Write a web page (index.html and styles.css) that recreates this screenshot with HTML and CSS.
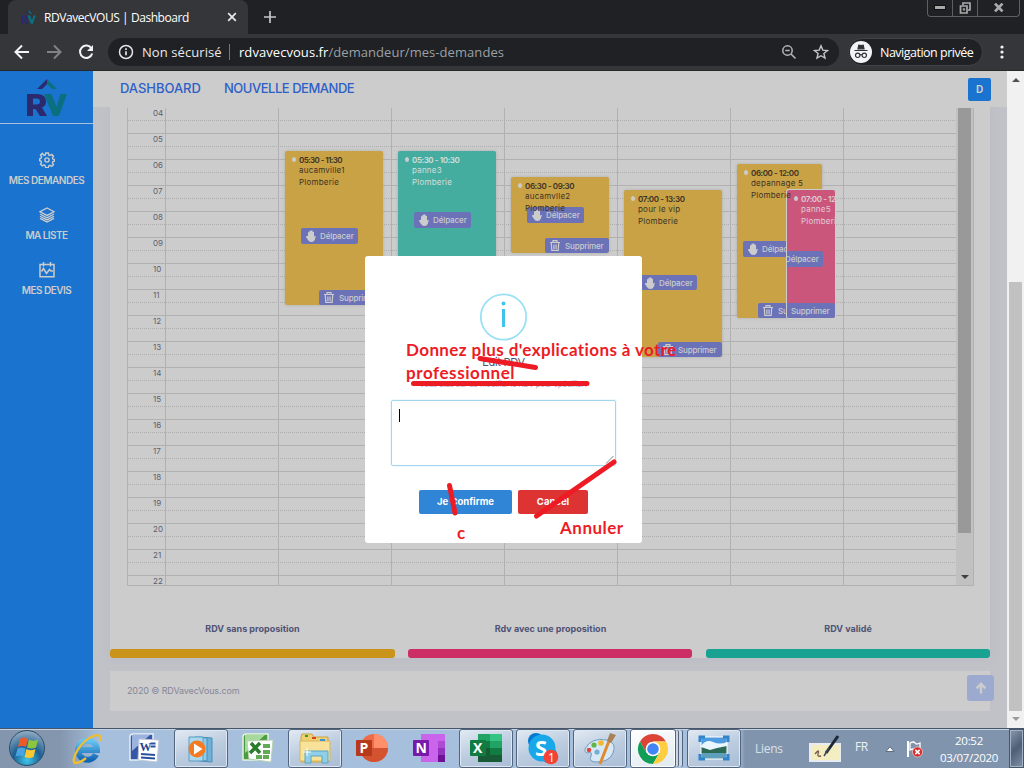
FILE: index.html
```html
<!DOCTYPE html>
<html lang="fr">
<head>
<meta charset="utf-8">
<title>RDVavecVOUS | Dashboard</title>
<link rel="stylesheet" href="styles.css">
</head>
<body>
<svg width="0" height="0" class="defs">
  <symbol id="logo" viewBox="0 0 40 38">
    <path fill="#2b2a6e" d="M10 10 20 0v5l-5 5zM0 15h10q9 0 9 7.500 0 4.500-4 6l5 8.500h-7l-4.500-7H6v7H0zm6 4.500v6h3.500q3.500 0 3.500-3t-3.500-3z"/>
    <path fill="#0c6f80" d="M20 0l10 10h-5l-5-5zM17 15h7.500l5 13 4-13h6.500l-8 22h-6z"/>
  </symbol>
  <symbol id="hand" viewBox="0 0 10 12">
    <path fill="#ccc" d="M2 6V2.500q.8-1.200 1.400 0V1.200q.9-1.200 1.600 0v-.4q.9-1 1.600 0v1.300q.9-.9 1.400 0V7l.6-1q1-.7 1.200.2L8.800 9.800Q8 12 5.300 12 3 12 1.800 9.800L0 7q-.1-1.500 1.200-1z"/>
  </symbol>
  <symbol id="trash" viewBox="0 0 10 11">
    <path fill="none" stroke="#ccc" stroke-width="1.200" d="M0 2.500h10M3 2V.6h4V2M1.300 3l.5 7.400h6.400L8.700 3M3.900 4.500v4.500M6.100 4.500v4.500"/>
  </symbol>
</svg>

<div class="tabstrip">
  <div class="tab">
    <svg class="favicon" width="15" height="14"><use href="#logo"/></svg>
    <span class="tab-title">RDVavecVOUS | Dashboard</span>
    <svg width="10" height="10" viewBox="0 0 10 10"><path d="M1.200 1.200l7.600 7.600M8.800 1.200 1.200 8.800" stroke="#e8eaed" stroke-width="1.700"/></svg>
  </div>
  <svg class="newtab" width="12" height="12"><path d="M6 0v12M0 6h12" stroke="#c4c6ca" stroke-width="1.700"/></svg>
  <div class="winctl">
    <div class="wc"><svg width="12" height="5"><rect x=".5" y=".5" width="11" height="4" fill="#aaa" stroke="#111"/></svg></div>
    <div class="wc"><svg width="12" height="12" fill="none" stroke="#aaa" stroke-width="1.700"><path d="M4 3V1h7v7H9M1.500 4h6.500v7H1.500z"/><path d="M4.200 6.700h1.400v1.400H4.200z" stroke-width="1"/></svg></div>
    <div class="wc wide"><svg width="12" height="9"><path d="M2 .5l7.500 8M9.500 .5l-7.500 8" stroke="#aaa" stroke-width="2.600"/></svg></div>
  </div>
</div>

<div class="toolbar">
  <svg width="104" height="36" fill="none" stroke-width="2">
    <path d="M29 18H16M22 11.500 15.500 18l6.500 6.500" stroke="#f1f3f4"/>
    <path d="M47 18h13M54 11.500 60.500 18 54 24.500" stroke="#808285"/>
    <path d="M91.500 14.500a6.200 6.200 0 1 0 .7 5" stroke="#f1f3f4"/><path d="M93 11v6h-6z" fill="#f1f3f4"/>
  </svg>
  <div class="omnibox">
    <svg width="16" height="16" fill="none" stroke="#e3e5e8" stroke-width="1.500"><circle cx="8" cy="8" r="6.500"/><path d="M8 7.200v4M8 4.300v1.600" stroke-width="1.700"/></svg>
    <span class="unsafe">Non sécurisé</span>
    <span class="sep"></span>
    <span class="url"><b>rdvavecvous.fr</b>/demandeur/mes-demandes</span>
    <svg class="zoomico" width="16" height="16" fill="none" stroke="#b4b6ba" stroke-width="1.500"><circle cx="6.500" cy="6.500" r="4.700"/><path d="M4.300 6.500h4.400M10 10l4.500 4.500"/></svg>
    <svg width="16" height="16" fill="none" stroke="#c4c6ca" stroke-width="1.400"><path d="M8 1.800l1.800 4.300 4.700.4-3.600 3 1.100 4.600L8 11.700 4 14.100l1.100-4.600-3.600-3 4.700-.4z"/></svg>
  </div>
  <div class="incog">
    <svg width="22" height="22"><circle cx="11" cy="11" r="11" fill="#f1f3f4"/><path d="M4.500 9.500h13M8 7.800l.8-3.600 2.200.5 2.200-.5.8 3.600z" fill="#303134" stroke="#303134" stroke-width="1.200"/><g fill="none" stroke="#303134" stroke-width="1.100"><circle cx="7.700" cy="14.300" r="2.200"/><circle cx="14.300" cy="14.300" r="2.200"/><path d="M9.800 14q1.200-.7 2.400 0"/></g></svg>
    <span>Navigation privée</span>
  </div>
  <svg class="kebab" width="4" height="14" fill="#f1f3f4"><circle cx="2" cy="2" r="1.600"/><circle cx="2" cy="7" r="1.600"/><circle cx="2" cy="12" r="1.600"/></svg>
</div>

<div class="page">
  <nav class="side">
    <div class="brand"><svg width="40" height="38"><use href="#logo"/></svg></div>
    <a class="navitem"><svg width="16" height="16" fill="none" stroke="#ccc" stroke-width="1.400"><path d="M6.700 1h2.600l.4 1.900 1.300.6 1.700-1.100 1.800 1.800-1.100 1.700.5 1.300 1.600.1v1.900l-1.600.4-.5 1.300 1.100 1.700-1.800 1.800-1.700-1.100-1.300.6-.4 1.900H6.700l-.4-1.900L5 12.800l-1.700 1.100-1.800-1.800 1.100-1.700L2 9.100l-1.300-.4V7L2 6.200l.6-1.300-1.100-1.700 1.800-1.800L5 3.500l1.300-.6z"/><circle cx="8" cy="8" r="2.100"/></svg><span class="n1">MES DEMANDES</span></a>
    <a class="navitem"><svg width="16" height="16" fill="none" stroke="#ccc" stroke-width="1.300"><path d="M8 1l7 3.700-7 3.700-7-3.700zM1 7l7 3.700L15 7M1 9.200l7 3.700 7-3.700M1 11.400l7 3.700 7-3.700"/></svg><span class="n2">MA LISTE</span></a>
    <a class="navitem"><svg width="16" height="16" fill="none" stroke="#ccc" stroke-width="1.500"><path d="M1 2.500h14v12.300H1zM4.500 0v4.500M11.500 0v4.500M2.500 9.500l2-3 3 5 3-4 1.500 1.500h2"/></svg><span class="n3">MES DEVIS</span></a>
  </nav>

  <main class="main">
    <header class="head"><a class="h1">DASHBOARD</a><a class="h2">NOUVELLE DEMANDE</a><span class="avatar">D</span></header>
    <section class="card">
      <div class="calendar">
        <div class="hours">
          <div>04</div><div>05</div><div>06</div><div>07</div><div>08</div><div>09</div><div>10</div><div>11</div><div>12</div><div>13</div><div>14</div><div>15</div><div>16</div><div>17</div><div>18</div><div>19</div><div>20</div><div>21</div><div>22</div>
        </div>
        <div class="days"><i></i><i></i><i></i><i></i><i></i><i></i><i></i></div>
        <div class="calscroll"><div class="thumb"></div><span class="down"></span></div>

        <div class="event amber e1"><b>05:30 - 11:30</b><p>aucamville1</p><p>Plomberie</p><span class="btn move"><svg width="10" height="12"><use href="#hand"/></svg>Délpacer</span><span class="btn del"><svg width="10" height="11"><use href="#trash"/></svg>Supprimer</span></div>
        <div class="event teal e2"><b>05:30 - 10:30</b><p>panne3</p><p>Plomberie</p><span class="btn move"><svg width="10" height="12"><use href="#hand"/></svg>Délpacer</span></div>
        <div class="event amber e3"><b>06:30 - 09:30</b><p>aucamvlle2</p><p>Plomberie</p><span class="btn move"><svg width="10" height="12"><use href="#hand"/></svg>Délpacer</span><span class="btn del"><svg width="10" height="11"><use href="#trash"/></svg>Supprimer</span></div>
        <div class="event amber e4"><b>07:00 - 13:30</b><p>pour le vip</p><p>Plomberie</p><span class="btn move"><svg width="10" height="12"><use href="#hand"/></svg>Délpacer</span><span class="btn del"><svg width="10" height="11"><use href="#trash"/></svg>Supprimer</span></div>
        <div class="event amber e5"><b>06:00 - 12:00</b><p>depannage 5</p><p>Plomberie</p><span class="btn move"><svg width="10" height="12"><use href="#hand"/></svg>Délpacer</span><span class="btn del"><svg width="10" height="11"><use href="#trash"/></svg>Supprimer</span></div>
        <div class="event pink e6"><b>07:00 - 12:00</b><p>panne5</p><p>Plomberie</p><span class="btn move"><svg width="10" height="12"><use href="#hand"/></svg>Délpacer</span><span class="btn del"><svg width="10" height="11"><use href="#trash"/></svg>Supprimer</span></div>
      </div>
      <div class="legend">
        <div class="lg1">RDV sans proposition<i></i></div>
        <div class="lg2">Rdv avec une proposition<i></i></div>
        <div class="lg3">RDV validé<i></i></div>
      </div>
    </section>
    <footer class="foot">2020 © RDVavecVous.com</footer>
    <span class="totop"><svg width="12" height="12" fill="none" stroke="#ccc" stroke-width="2.400"><path d="M6 11.500V2M1.500 6.300 6 1.800l4.500 4.500"/></svg></span>
  </main>
  <div class="scroll"><span class="up"></span><div class="thumb"></div><span class="down"></span></div>
</div>

<div class="modal">
  <svg class="info" width="48" height="48"><circle cx="23.500" cy="24" r="22.700" fill="none" stroke="#9de0f6" stroke-width="1.800"/><circle cx="23.500" cy="10.500" r="1.900" fill="#3fc3ee"/><rect x="22" y="16" width="3" height="18" fill="#3fc3ee"/></svg>
  <h2>Edit RDV</h2>
  <p>Vous etes sur de modifier le RDV pour spécifier?</p>
  <div class="area"><span class="caret"></span><svg width="9" height="9"><path d="M1 8.500 8.500 1M5 8.500 8.500 5" stroke="#666" stroke-width=".8"/></svg></div>
  <div class="actions"><span class="ok">Je Confirme</span><span class="cancel">Cancel</span></div>
</div>

<svg class="strokes" width="1024" height="768" fill="none" stroke="#ed1c24" stroke-width="5" stroke-linecap="round"><path d="M480 358.500 535.500 367.500M413.500 383.500H587M449.500 485.500 455 513M536.500 516 614 462"/></svg>
<div class="note n-a">Donnez plus d'explications à votre</div>
<div class="note n-b">professionnel</div>
<div class="note n-c">c</div>
<div class="note n-d">Annuler</div>

<div class="taskbar">
  <div class="start"><svg width="38" height="38"><defs><radialGradient id="orb" cx=".5" cy=".85" r=".8"><stop offset="0" stop-color="#3fc6ea"/><stop offset=".5" stop-color="#1c5f92"/><stop offset="1" stop-color="#8aa7bf"/></radialGradient></defs><circle cx="19" cy="19" r="17.500" fill="url(#orb)" stroke="#2b4d68"/><path fill="#ea5a2a" d="M12 10q4-3 8 0l-2 8q-4-2-8 0z"/><path fill="#8cc63e" d="M21 10.500q4 2.500 9 0l-2 8q-4 2-9 0z"/><path fill="#4aa3df" d="M9.500 19.500q4-2 8 0l-2 8q-4-2-8 0z"/><path fill="#fdc72f" d="M18.500 20q4 2.500 9 0l-2 8q-4 2-9 0z"/></svg></div>
  <div class="slot"><svg width="34" height="34"><defs><linearGradient id="ie" x2="0" y2="1"><stop stop-color="#66c5f2"/><stop offset="1" stop-color="#1267b5"/></linearGradient></defs><path d="M26 22.500a9.500 9.500 0 1 1 1-4.500H9" fill="none" stroke="url(#ie)" stroke-width="6"/><path d="M30 9q2-7-5-5.500Q14 7 7 19 1 31 6 31q4 0 10-5" fill="none" stroke="#f2bd2e" stroke-width="2.300"/></svg></div>
  <div class="slot"><svg width="32" height="32"><path d="M2 4q0-3 3-3h20v26H2z" fill="#3558a6" stroke="#e8eef8" stroke-width="1.500"/><path d="M4 2h18L4 18z" fill="#9bb3df"/><path d="M11 6l20 1-2 22-19-2z" fill="#fff" stroke="#bcc7da"/><text x="11.500" y="18" class="serif" font-size="12" fill="#24458f">W</text><path d="M22.500 10.500h5M22.500 13.500h5M13 21l14 1M13 24.500l14 1" stroke="#2b4f9f" stroke-width="1.900"/></svg></div>
  <div class="slot on"><svg width="32" height="32"><path d="M14 4l13 1v24l-13-1z" fill="#6fb2d9" stroke="#4b8db7"/><path d="M10 4l12 1v23l-12-1z" fill="#8ecbea" stroke="#4b8db7"/><path d="M4 4h14v24H4z" fill="#a9d8ef" stroke="#5a9dc4"/><circle cx="12" cy="16" r="8.500" fill="#f47b20"/><path d="M9 10.500l8.500 5.500L9 21.500z" fill="#fff"/></svg></div>
  <div class="slot"><svg width="32" height="32"><path d="M1 4q0-3 3-3h22v26H1z" fill="#4a9c3f" stroke="#e3f3de" stroke-width="1.500"/><path d="M3 2h20L3 20z" fill="#a6d99b"/><path d="M5 8l26-1-2 22-22-3z" fill="#fff" stroke="#b8d2b2"/><path d="M9 10l9 10M18 10 8 20" stroke="#2a7b2c" stroke-width="3.500"/><path d="M21 11h7v4h-7zM21 17h7v4h-7zM14 22h6v4h-6zM21 22h6v4h-6z" fill="#62ab55"/></svg></div>
  <div class="slot on"><svg width="34" height="34"><path d="M3 5l1-3h10l2 3h14v25H3z" fill="#efd06d" stroke="#c9a544"/><path d="M2 9h30v20H2z" fill="#f8e29a" stroke="#d6b65a"/><path d="M7 3h3v2H7z" fill="#2aa33b"/><path d="M14 5h4v2h-4z" fill="#d8402f"/><path d="M22 7h5v2h-5z" fill="#3e8fd4"/><path d="M7 31V19h23v12h-6v-7H13v7z" fill="#8fd0e8" stroke="#5ba4c2"/><path d="M9 16v8M5 20h8" stroke="#fff"/></svg></div>
  <div class="slot"><svg width="32" height="32"><circle cx="18" cy="15" r="14" fill="#ed6c47"/><path d="M18 1a14 14 0 0 1 14 14H18z" fill="#ff8f6b"/><path d="M4 15h28a14 14 0 0 1-28 0z" fill="#d35230"/><rect y="7" width="16" height="16" rx="1" fill="#b7391b"/><text x="3.500" y="20" class="tile">P</text></svg></div>
  <div class="slot"><svg width="32" height="32"><path d="M8 1h24v28H8z" fill="#ca64ea"/><path d="M25 8h7v7h-7z" fill="#ae4bd5"/><path d="M25 15h7v7h-7z" fill="#9332bf"/><path d="M25 22h7v7h-7z" fill="#6d1296"/><rect y="7" width="16" height="16" rx="1" fill="#7719aa"/><text x="2.500" y="20" class="tile">N</text></svg></div>
  <div class="slot on"><svg width="32" height="32"><path d="M8 1h12v28H8z" fill="#21a366"/><path d="M20 1h12v7H20z" fill="#33c481"/><path d="M8 8h12v7H8z" fill="#107c41"/><path d="M20 8h12v7H20z" fill="#21a366"/><path d="M8 15h24v14H8z" fill="#185c37"/><path d="M20 15h12v7H20z" fill="#107c41"/><rect y="7" width="16" height="16" rx="1" fill="#107c41"/><text x="3" y="20" class="tile">X</text></svg></div>
  <div class="slot on"><svg width="32" height="32"><circle cx="9" cy="8" r="8" fill="#0078d4"/><circle cx="22" cy="22" r="8" fill="#0078d4"/><circle cx="15" cy="15" r="13.500" fill="#18a8ea"/><text x="8" y="23" class="tile big">S</text><circle cx="24" cy="24" r="7.300" fill="#f44336"/><text x="21" y="28.500" class="badge">1</text></svg></div>
  <div class="slot on"><svg width="34" height="34"><path d="M2 17Q8 5 24 8q10 3 6 13-4 9-16 9Q5 30 8 24q2-5-4-3-3-1-2-4z" fill="#d7e9f7" stroke="#6f9dc0"/><circle cx="6" cy="18" r="2.300" fill="#e0483c"/><circle cx="11" cy="13" r="2.600" fill="#64b547"/><circle cx="18" cy="11" r="2.800" fill="#f4b82c"/><circle cx="14" cy="20" r="2.600" fill="#75acd8"/><path d="M17 32 26 9" stroke="#e08a2c" stroke-width="3"/><path d="M24 9l3-8 6 2-5 8z" fill="#a98159"/></svg></div>
  <div class="slot on stack"><svg width="32" height="32" viewBox="-16 -16 32 32"><circle r="15" fill="#fff"/><path d="M-13 -7.500A15 15 0 0 1 13 -7.500H0L-6.500 3.800z" fill="#db4437"/><path d="M-13 -7.500A15 15 0 0 0 0 15L6.500 3.800H-6.500z" fill="#109d58"/><path d="M13 -7.500A15 15 0 0 1 0 15L6.500 3.800 6 -3 0 -7.500z" fill="#ffcd40"/><circle r="7.300" fill="#fff"/><circle r="5.800" fill="#4285f4"/></svg></div>
  <div class="slot on"><svg width="32" height="30"><path d="M3 3h26v22H3z" fill="#4d9be0"/><path d="M3 12q5-7 12-4t14 0v8H3z" fill="#eaf6fd"/><path d="M3 13l9 3 7-2 10-2v8H3z" fill="#2c6a56"/><path d="M3 19h26v6H3z" fill="#5f9fba"/><path d="M3 3h26v22H3z" fill="none" stroke="#fff"/><path d="M2 8V3h5M25 3h5v5M30 20v5h-5M7 25H2v-5" fill="none" stroke="#2f84cb" stroke-width="3"/></svg></div>
  <div class="tray">
    <span class="liens">Liens</span>
    <svg class="pen" width="32" height="30"><path d="M1 11h30v17H1z" fill="#f4edc0" stroke="#e8ecf2" stroke-width="2"/><path d="M6 21q5-6 3 0-1 3 3 2" fill="none" stroke="#7a5c50" stroke-width="1.300"/><path d="M17 20 29 3" stroke="#1c2735" stroke-width="3"/><path d="M15 23l5-8" stroke="#3b4856" stroke-width="1.500"/></svg>
    <span class="fr">FR</span>
    <svg class="tri" width="10" height="6"><path d="M1 5.500 5 .7l4 4.800z" fill="#fff" stroke="#5e6f85"/></svg>
    <svg class="flag" width="18" height="18"><path d="M2 1v16" stroke="#fff" stroke-width="2"/><path d="M4 3q4-2 5 0t5 0v8q-4 1-5-1t-5 0z" fill="#8293aa" stroke="#fff" stroke-width="1.300"/><circle cx="11.500" cy="12" r="5" fill="#d9292c" stroke="#f4d0d0" stroke-width=".7"/><path d="M9.300 9.800l4.400 4.400M13.700 9.800l-4.400 4.400" stroke="#fff" stroke-width="1.700"/></svg>
    <span class="clock">20:52<br>03/07/2020</span>
    <span class="peek"></span>
  </div>
</div>
</body>
</html>
```

FILE: styles.css
```css
* { box-sizing: border-box; }
body { margin: 0; width: 1024px; height: 768px; overflow: hidden; position: relative; font-family: Inter, "Open Sans", sans-serif; background: #c1c2c6; }
p, h2 { margin: 0; font-weight: 400; }
svg { display: block; flex: none; }
.defs { position: absolute; }
span { white-space: nowrap; }

/* browser chrome */
.tabstrip { height: 34px; background: #202124; display: flex; align-items: flex-start; padding-left: 8px; font-family: "Open Sans", sans-serif; }
.tab { width: 240px; height: 34px; background: #35363a; border-radius: 8px 8px 0 0; display: flex; align-items: center; padding: 0 11px 0 13px; color: #fff; font-size: 12px; }
.tab-title { flex: 1; margin-left: 8px; letter-spacing: -.44px; }
.newtab { margin: 11px 0 0 16px; }
.winctl { margin-left: auto; margin-right: 4px; display: flex; width: 93px; height: 18px; margin-top: -1px; border: 1px solid #5e5f62; border-top: 0; border-radius: 0 0 4px 4px; }
.wc { width: 25px; display: flex; justify-content: center; align-items: center; border-right: 1px solid #5e5f62; }
.wide { width: 41px; border: 0; }
.toolbar { height: 37px; background: #35363a; border-bottom: 1px solid #28282b; display: flex; align-items: center; font-family: "Open Sans", sans-serif; font-size: 13px; color: #fff; }
.omnibox { margin-left: 4px; width: 731px; height: 28px; border-radius: 14px; background: #202124; display: flex; align-items: center; padding: 0 10px; color: #e8eaed; }
.unsafe { margin-left: 8px; width: 80px; letter-spacing: .08px; }
.sep { width: 1px; height: 16px; background: #75777a; margin: 0 9px 0 7px; }
.url { flex: 1; color: #9aa0a6; letter-spacing: .06px; }
.url b { font-weight: 400; color: #fff; }
.zoomico { margin-right: 16px; }
.incog { margin-left: 9px; width: 135px; height: 28px; border: 1px solid #414246; border-radius: 14px; background: #202124; display: flex; align-items: center; gap: 8px; padding-left: 1px; font-size: 12.500px; letter-spacing: -.5px; }
.kebab { margin-left: 17px; }

/* page shell */
.page { display: flex; height: 657px; }
.side { width: 93px; background: #1973cf; color: #ccc; }
.brand { height: 53px; border-bottom: 1px solid #a9c0da; display: flex; justify-content: center; padding: 8px 0 0 1px; margin-bottom: 28px; }
.navitem { height: 55px; display: flex; flex-direction: column; align-items: center; gap: 5px; font-size: 10px; line-height: 14px; font-weight: 600; }
.n1 { letter-spacing: -.5px; }
.n2 { letter-spacing: -.55px; }
.n3 { letter-spacing: -.5px; }
.main { width: 914px; position: relative; background: #c1c2c7; }
.head { height: 36px; background: #ccc; display: flex; align-items: center; padding: 0 16px 0 27px; color: #2c60c8; font-size: 13px; font-weight: 500; }
.head a { padding-bottom: 2px; }
.h1 { width: 81px; letter-spacing: -.04px; }
.h2 { margin-left: 23px; letter-spacing: -.48px; }
.avatar { margin-left: auto; width: 23px; height: 23px; border-radius: 2px; background: #1973cf; color: #ccc; font-size: 10px; font-weight: 700; text-align: center; line-height: 23px; }
.card { margin: 0 17px; height: 551px; padding: 1px 16px 0 17px; background: #ccc; box-shadow: 0 0 9px #b9b9c6; clip-path: inset(0 -12px -12px -12px); }

/* calendar */
.calendar { position: relative; width: 847px; height: 478px; display: flex; border: 1px solid #b1b1b1; border-top: 0; overflow: hidden; background: #ccc; }
.hours { width: 37px; font-size: 8px; color: #5d5e72; margin-top: -1px; }
.hours div { width: 829px; height: 26px; border-top: 1px solid #b1b1b1; line-height: 11px; background: repeating-linear-gradient(to right, #aeaeae 0 1px, #ccc 1px 2px) 0 12px / 100% 1px no-repeat; padding-left: 25px; }
.days { display: flex; position: relative; height: 100%; }
.days i { width: 113px; border-left: 1px solid #b1b1b1; }
.calscroll { margin-left: auto; width: 17px; background: #c1c1c1; position: relative; display: flex; flex-direction: column; align-items: center; }
.calscroll .thumb { width: 13px; height: 425px; background: #999; }
.down { border: 4px solid transparent; border-top-color: #404040; border-bottom: 0; }
.calscroll .down { margin-top: 42px; }

/* events: free placement on the time grid */
.event { position: absolute; width: 98px; overflow: hidden; border-radius: 2px; padding: 4px 0 0 14px; font-size: 8px; line-height: 12px; color: #3d3325; box-shadow: 0 0 3px #aaa; letter-spacing: .22px; white-space: nowrap; }
.event::before { content: ""; position: absolute; left: 7px; top: 6px; width: 4px; height: 5px; border-radius: 50%; background: #ccc; }
.event b { display: block; font-weight: 600; line-height: 10px; letter-spacing: -.4px; }
.e1 b { letter-spacing: -.6px; }
.event p { position: relative; z-index: 1; }
.event p:nth-of-type(1) { line-height: 11px; }
.amber { background: #c9a246; }
.teal { background: #45aca0; color: #d4dedb; font-weight: 500; }
.pink { background: #cb567c; color: #e0ccd4; font-weight: 500; box-shadow: 0 0 0 1px #ccc; }
.btn { position: absolute; height: 16px; border-radius: 2px; background: #6b72b8; color: #ccc; display: flex; align-items: center; font-weight: 500; }
.move { width: 57px; padding-left: 5px; gap: 4px; letter-spacing: -.1px; }
.del { width: 64px; height: 15px; right: 0; bottom: 0; padding-left: 5px; gap: 5px; letter-spacing: -.17px; }
.e1 { left: 157px; top: 43px; height: 154px; } .e1 .move { left: 16px; top: 77px; }
.e2 { left: 270px; top: 43px; height: 128px; } .e2 .move { left: 16px; top: 61px; }
.e3 { left: 383px; top: 69px; height: 76px; } .e3 .move { left: 16px; top: 30px; }
.e4 { left: 496px; top: 82px; height: 167px; } .e4 .move { left: 16px; top: 85px; height: 15px; }
.e5 { left: 609px; top: 56px; width: 85px; height: 154px; } .e5 .move { left: 6px; top: 77px; }
.e6 { left: 659px; top: 82px; width: 48px; height: 128px; } .e6 .move { left: -21px; top: 61px; }

.legend { display: grid; grid-template-columns: 285px 285px 284px; column-gap: 13px; margin: 36px -16px 0 -17px; text-align: center; font-size: 9px; line-height: 14px; font-weight: 700; color: #4f5376; white-space: nowrap; letter-spacing: .02px; }
.legend i { display: block; height: 9px; margin-top: 13px; border-radius: 3px; background: #ca931a; }
.lg2 i { width: 284px; background: #cb2d64; }
.lg3 i { background: #18a292; }
.foot { position: relative; margin: 13px 17px 0; height: 40px; background: #ccc; padding-left: 17px; line-height: 40px; font-size: 9px; color: #85879a; letter-spacing: -.13px; }
.totop { position: absolute; left: 874px; top: 604px; width: 27px; height: 26px; border-radius: 3px; background: #9baace; display: flex; align-items: center; justify-content: center; }
.scroll { width: 17px; background: #f1f1f1; display: flex; flex-direction: column; align-items: center; }
.up { margin-top: 7px; border: 4px solid transparent; border-bottom-color: #505050; border-top: 0; }
.scroll .thumb { width: 13px; height: 429px; margin-top: 200px; background: #c1c1c1; }
.scroll .down { margin-top: 6px; border-top-color: #9b9b9b; }

/* dialog */
.modal { position: absolute; left: 365px; top: 256px; width: 277px; height: 287px; background: #fff; border-radius: 3px; padding: 37px 26px 0; display: flex; flex-direction: column; align-items: center; }
.modal h2 { font-size: 11px; line-height: 16px; margin-top: 13px; color: #50546e; letter-spacing: -.3px; }
.modal p { font-size: 8px; line-height: 12px; margin-top: 8px; color: #a7abc3; white-space: nowrap; letter-spacing: -.3px; }
.area { width: 225px; height: 66px; border: 1px solid #a5d5ec; border-radius: 2px; margin-top: 10px; padding: 8px 1px 1px 7px; display: flex; justify-content: space-between; box-shadow: 0 0 2px #c4e6f5; }
.area svg { align-self: flex-end; }
.caret { width: 1px; height: 13px; background: #000; }
.actions { margin-top: 24px; display: flex; gap: 6px; font-size: 9.500px; font-weight: 700; line-height: 24px; color: #fff; text-align: center; letter-spacing: 0; }
.ok { width: 93px; background: #3085d6; border-radius: 2px; }
.cancel { width: 70px; background: #dd3333; border-radius: 2px; }

/* handwritten markup drawn over the dialog */
.strokes { position: absolute; left: 0; top: 0; }
.note { position: absolute; font: 700 17px/22px Lato, sans-serif; color: #ed1c24; white-space: nowrap; letter-spacing: .4px; }
.n-a { left: 406px; top: 339px; }
.n-b { left: 406px; top: 362px; letter-spacing: .57px; }
.n-c { left: 457px; top: 522px; }
.n-d { left: 560px; top: 517px; letter-spacing: .5px; }

/* taskbar */
.taskbar { height: 40px; display: flex; border-top: 1px solid #45566b; background: linear-gradient(90deg, #8496ae 0 60px, #a5bfdc 100px 738px, #8194ad 745px); box-shadow: inset 0 1px #c5d3e3; font-family: "Open Sans", sans-serif; }
.start { width: 58px; padding: 0 8px; }
.slot { width: 57px; height: 39px; display: flex; align-items: center; justify-content: center; flex: none; }
.on { width: 54px; margin: 0 1px 0 2px; border: 1px solid #52657c; border-radius: 3px; background: linear-gradient(160deg, #e2eaf3, #bdcde0 50%, #a9bdd5); box-shadow: inset 0 0 0 1px #dfe8f2; }
.stack { width: 46px; margin-right: 9px; background: linear-gradient(160deg, #fff, #dfe8f1); box-shadow: inset 0 0 0 1px #fff, 3px 0 0 -1px #c8d6e6, 4px 0 0 -1px #52657c, 7px 0 0 -1px #c8d6e6, 8px 0 0 -1px #52657c; }
.serif { font-family: "Liberation Serif", serif; font-weight: 700; }
.tile { font-family: "Open Sans", sans-serif; font-weight: 700; font-size: 14px; fill: #fff; }
.big { font-size: 22px; }
.badge { font-size: 12px; fill: #fff; }
.tray { display: flex; flex: 1; align-items: center; color: #edf1f6; font-size: 12px; }
.liens { margin-left: 13px; width: 54px; color: #d9e0e9; letter-spacing: -.3px; }
.pen { margin-top: -2px; }
.fr { margin-left: 14px; width: 30px; margin-top: -4px; letter-spacing: -.4px; }
.flag { margin-left: 11px; }
.clock { margin-left: 15px; width: 60px; text-align: center; font-size: 11.500px; line-height: 17px; letter-spacing: -.3px; color: #fff; }
.peek { margin-left: auto; width: 15px; height: 39px; border: 1px solid #46566b; background: linear-gradient(135deg, #8b99ab, #4e5f76 50%, #8093aa); box-shadow: inset 0 0 0 1px #a3b1c3; }
```
